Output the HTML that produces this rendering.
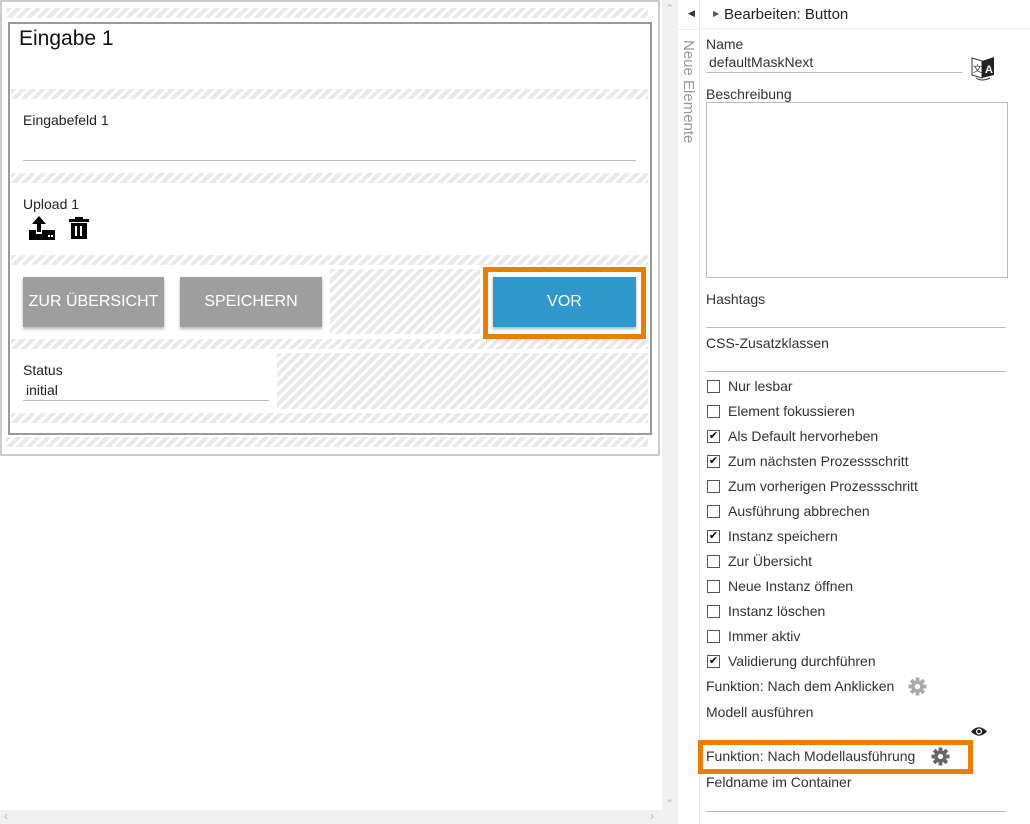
<!DOCTYPE html>
<html><head><meta charset="utf-8"><style>
*{box-sizing:border-box;margin:0;padding:0}
body{width:1030px;height:824px;position:relative;overflow:hidden;background:#fff;font-family:"Liberation Sans",sans-serif;color:#333}
.a{position:absolute}
.h{background:repeating-linear-gradient(135deg,#e9e9e9 0 4px,#fff 4px 7px)}
.t{position:absolute;font-size:14px;white-space:nowrap}
.ul{position:absolute;height:1px;background:#bbb}
.btn{position:absolute;background:#9e9e9e;color:#fff;font-size:16px;display:flex;align-items:center;justify-content:center;box-shadow:0 2px 3px rgba(0,0,0,.3)}
.cb{position:absolute;left:707px;width:13px;height:13px;border:1px solid #555;background:#fff;font-size:11px;line-height:11px;text-align:center;color:#000}
</style></head><body>
<div class="a" style="left:0;top:0;width:660px;height:456px;border:2px solid #ccc;background:#fff"></div>
<div class="a h" style="left:6px;top:8px;width:642px;height:10px"></div>
<div class="a h" style="left:6px;top:437px;width:642px;height:10px"></div>
<div class="a" style="left:8px;top:22px;width:644px;height:413px;border:2px solid #999;background:#fff"></div>
<div class="t" style="left:19px;top:27px;font-size:21px;color:#111">Eingabe 1</div>
<div class="a h" style="left:11px;top:89px;width:637px;height:10px"></div>
<div class="t" style="left:23px;top:112px;color:#222">Eingabefeld 1</div>
<div class="ul" style="left:23px;top:160px;width:613px"></div>
<div class="a h" style="left:11px;top:173px;width:637px;height:10px"></div>
<div class="t" style="left:23px;top:196px;color:#222">Upload 1</div>
<svg class="a" style="left:29px;top:216px" width="26" height="24" viewBox="0 0 26 24"><path d="M10 0L3 8h5v8h4V8h5z M0 14h7v4h6v-4h13v10H0z" fill="#000"/><rect x="19" y="19" width="2" height="2" fill="#fff"/><rect x="22" y="19" width="2" height="2" fill="#fff"/></svg>
<svg class="a" style="left:69px;top:217px" width="20" height="22" viewBox="0 0 20 22"><path d="M6 0h8v2h6v3H0V2h6z M2 6h16v16H2z" fill="#000"/><rect x="6" y="9" width="2" height="10" fill="#fff"/><rect x="11" y="9" width="2" height="10" fill="#fff"/></svg>
<div class="a h" style="left:11px;top:255px;width:637px;height:10px"></div>
<div class="btn" style="left:23px;top:277px;width:141px;height:50px">ZUR ÜBERSICHT</div>
<div class="btn" style="left:180px;top:277px;width:142px;height:50px">SPEICHERN</div>
<div class="a h" style="left:330px;top:269px;width:150px;height:65px"></div>
<div class="a" style="left:483px;top:267px;width:163px;height:72px;border:5px solid #ef7d00;background:#fff"></div>
<div class="btn" style="left:493px;top:277px;width:143px;height:50px;background:#2e98cd">VOR</div>
<div class="a h" style="left:11px;top:339px;width:637px;height:10px"></div>
<div class="t" style="left:23px;top:362px;color:#222">Status</div>
<div class="t" style="left:26px;top:382px;color:#222">initial</div>
<div class="ul" style="left:23px;top:400px;width:246px"></div>
<div class="a h" style="left:277px;top:353px;width:371px;height:56px"></div>
<div class="a h" style="left:11px;top:413px;width:637px;height:10px"></div>
<div class="a" style="left:662px;top:0;width:16px;height:810px;background:#f0f0f0"></div>
<div class="t" style="left:665px;top:2px;font-size:11px;color:#bbb">&#8963;</div>
<div class="t" style="left:665px;top:792px;font-size:11px;color:#bbb">&#8964;</div>
<div class="a" style="left:0;top:810px;width:678px;height:14px;background:#f0f0f0"></div>
<div class="t" style="left:4px;top:809px;font-size:12px;color:#bbb">‹</div>
<div class="t" style="left:650px;top:809px;font-size:12px;color:#bbb">›</div>
<div class="a" style="left:699px;top:0;width:1px;height:824px;background:#e6e6e6"></div>
<div class="a" style="left:678px;top:29px;width:21px;height:1px;background:#eee"></div>
<div class="t" style="left:688px;top:8px;font-size:9px;color:#333">◀</div>
<div class="t" style="left:697px;top:40px;font-size:15px;color:#999;transform-origin:0 0;transform:rotate(90deg)">Neue Elemente</div>
<div class="t" style="left:713px;top:9px;font-size:8px;color:#555">▶</div>
<div class="t" style="left:724px;top:6px;font-size:15px;color:#222">Bearbeiten: Button</div>
<div class="a" style="left:700px;top:28px;width:330px;height:1px;background:#eee"></div>
<div class="t" style="left:706px;top:36px">Name</div>
<div class="t" style="left:709px;top:54px">defaultMaskNext</div>
<div class="ul" style="left:706px;top:72px;width:256px"></div>
<svg class="a" style="left:970px;top:54px" width="26" height="28" viewBox="0 0 26 28"><path d="M2 4l10 3v17L2 21z" fill="#fff" stroke="#333"/><path d="M12 7l12-4v18l-12 3z" fill="#222"/><text x="15" y="19" font-size="11" font-weight="bold" fill="#fff" font-family="Liberation Sans">A</text><text x="3" y="18" font-size="9" fill="#333" font-family="Noto Sans CJK JP">文</text><path d="M6 24q6 4 14 0" stroke="#333" fill="none"/></svg>
<div class="t" style="left:706px;top:86px">Beschreibung</div>
<div class="a" style="left:706px;top:102px;width:302px;height:176px;border:1px solid #bbb"></div>
<div class="t" style="left:706px;top:291px">Hashtags</div>
<div class="ul" style="left:706px;top:327px;width:300px"></div>
<div class="t" style="left:706px;top:335px">CSS-Zusatzklassen</div>
<div class="ul" style="left:706px;top:371px;width:300px"></div>
<div class="cb" style="top:380px"></div><div class="t" style="left:728px;top:378px">Nur lesbar</div>
<div class="cb" style="top:405px"></div><div class="t" style="left:728px;top:403px">Element fokussieren</div>
<div class="cb" style="top:430px">✔</div><div class="t" style="left:728px;top:428px">Als Default hervorheben</div>
<div class="cb" style="top:455px">✔</div><div class="t" style="left:728px;top:453px">Zum nächsten Prozessschritt</div>
<div class="cb" style="top:480px"></div><div class="t" style="left:728px;top:478px">Zum vorherigen Prozessschritt</div>
<div class="cb" style="top:505px"></div><div class="t" style="left:728px;top:503px">Ausführung abbrechen</div>
<div class="cb" style="top:530px">✔</div><div class="t" style="left:728px;top:528px">Instanz speichern</div>
<div class="cb" style="top:555px"></div><div class="t" style="left:728px;top:553px">Zur Übersicht</div>
<div class="cb" style="top:580px"></div><div class="t" style="left:728px;top:578px">Neue Instanz öffnen</div>
<div class="cb" style="top:605px"></div><div class="t" style="left:728px;top:603px">Instanz löschen</div>
<div class="cb" style="top:630px"></div><div class="t" style="left:728px;top:628px">Immer aktiv</div>
<div class="cb" style="top:655px">✔</div><div class="t" style="left:728px;top:653px">Validierung durchführen</div>
<div class="t" style="left:706px;top:678px">Funktion: Nach dem Anklicken</div>
<svg class="a" style="left:908px;top:677px" width="19" height="19" viewBox="-10 -10 20 20"><g fill="#aaa"><circle r="6.5"/><rect x="-2" y="-9.5" width="4" height="19"/><rect x="-2" y="-9.5" width="4" height="19" transform="rotate(45)"/><rect x="-2" y="-9.5" width="4" height="19" transform="rotate(90)"/><rect x="-2" y="-9.5" width="4" height="19" transform="rotate(135)"/></g><circle r="2.8" fill="#fff"/></svg>
<div class="t" style="left:706px;top:704px">Modell ausführen</div>
<svg class="a" style="left:971px;top:726px" width="16" height="11" viewBox="0 0 16 11"><path d="M0 5.5Q8 -3 16 5.5Q8 14 0 5.5z" fill="#222"/><circle cx="8" cy="5.5" r="3" fill="#fff"/><circle cx="8" cy="5.5" r="1.8" fill="#222"/></svg>
<div class="a" style="left:698px;top:740px;width:275px;height:34px;border:5px solid #ef7d00"></div>
<div class="t" style="left:706px;top:748px">Funktion: Nach Modellausführung</div>
<svg class="a" style="left:931px;top:747px" width="19" height="19" viewBox="-10 -10 20 20"><g fill="#666"><circle r="6.5"/><rect x="-2" y="-9.5" width="4" height="19"/><rect x="-2" y="-9.5" width="4" height="19" transform="rotate(45)"/><rect x="-2" y="-9.5" width="4" height="19" transform="rotate(90)"/><rect x="-2" y="-9.5" width="4" height="19" transform="rotate(135)"/></g><circle r="2.8" fill="#fff"/></svg>
<div class="t" style="left:706px;top:774px">Feldname im Container</div>
<div class="ul" style="left:706px;top:811px;width:300px"></div>
</body></html>
